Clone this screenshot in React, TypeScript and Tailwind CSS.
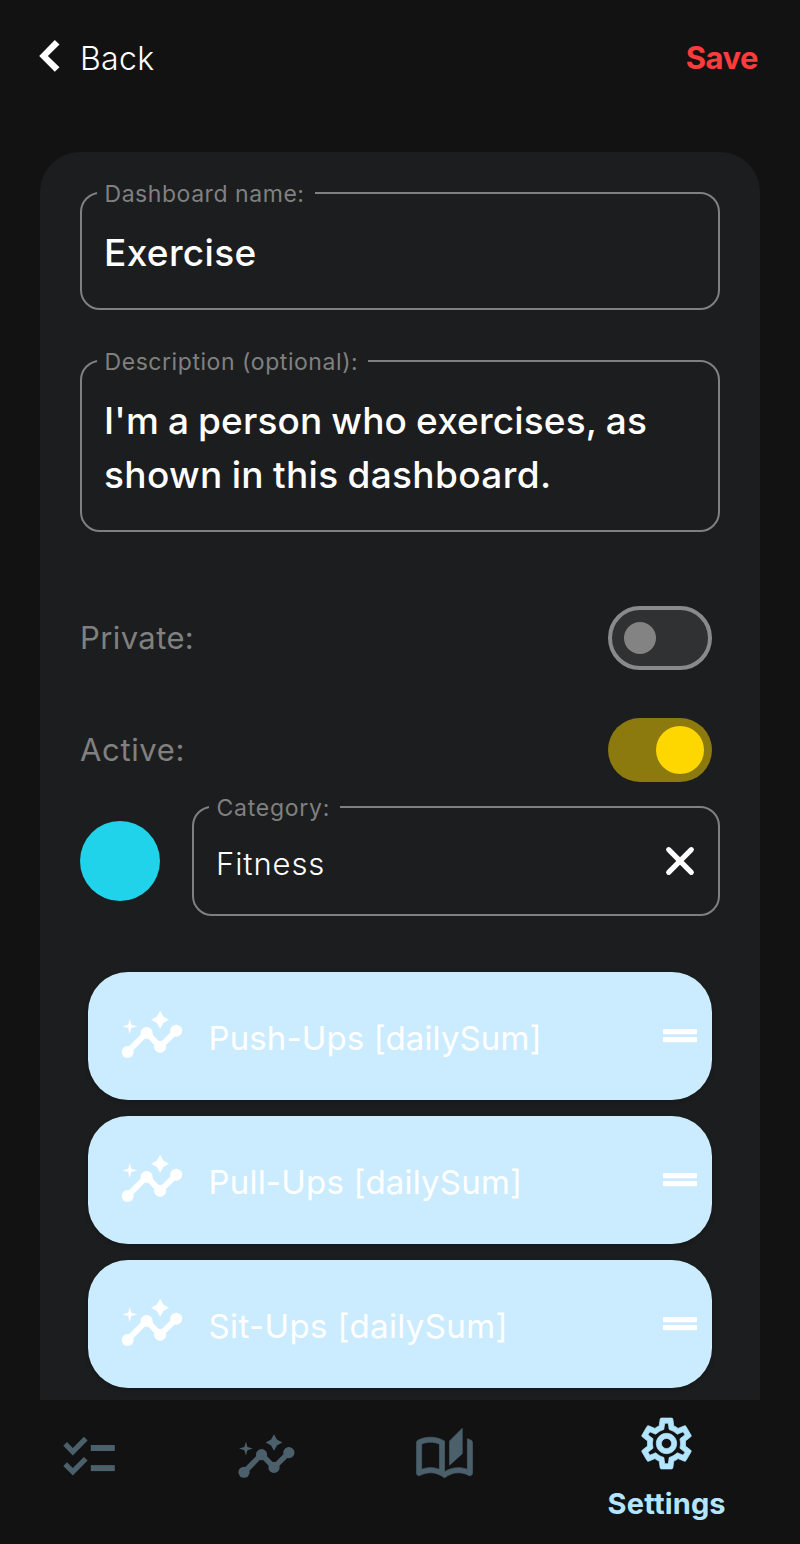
import React from "react";
import { MdOutlineAutoStories, MdOutlineSettings } from "react-icons/md";

function InsightsIcon({ className }: { className: string }) {
  return (
    <svg viewBox="0 0 24 24" className={className} fill="currentColor">
      <path d="M3.15 17.8L10.05 10.8L14.95 15.9L20.8 10.1" fill="none" stroke="currentColor" strokeWidth="2.15" />
      <circle cx="3.15" cy="17.8" r="2.2" />
      <circle cx="10.05" cy="10.9" r="2.2" />
      <circle cx="14.95" cy="15.9" r="2.2" />
      <circle cx="20.8" cy="10.1" r="2.2" />
      <path d="M14.95 2.85L16.1 4.95L18.2 6.1L16.1 7.25L14.95 9.35L13.8 7.25L11.7 6.1L13.8 4.95Z" />
      <path d="M3.9 5.8L4.5 7.9L6.6 8.5L4.5 9.1L3.9 11.2L3.3 9.1L1.2 8.5L3.3 7.9Z" />
    </svg>
  );
}

function ChecklistIcon({ className }: { className: string }) {
  return (
    <svg viewBox="0 0 61 61" className={className} fill="currentColor">
      <path d="M5.3 18.8L9 15.1L14.8 20.9L25.9 9.8L29.6 13.4L14.8 28.5Z" />
      <path d="M5.3 38.9L9 35.2L14.8 41L25.9 29.9L29.6 33.5L14.8 48.6Z" />
      <rect x="32.8" y="18" width="24" height="6" />
      <rect x="32.8" y="38.1" width="24" height="6" />
    </svg>
  );
}

function Field({ label, labelClass, className, children }: { label: string; labelClass: string; className: string; children: React.ReactNode }) {
  return (
    <fieldset className={`rounded-[20px] border-2 border-[#808080] ${className}`}>
      <legend className={`ml-[15px] h-6 pr-[10px] pl-[7.5px] text-[23px] leading-[26px] whitespace-nowrap text-[#808080] ${labelClass}`}>{label}</legend>
      {children}
    </fieldset>
  );
}

function Item({ label, className }: { label: string; className: string }) {
  return (
    <li className="flex h-32 shrink-0 items-center rounded-[40px] bg-[#cbecff] pr-[15px] pl-[31px] text-white shadow-[0_2px_4px_rgba(0,0,0,0.2)]">
      <InsightsIcon className="size-[66px] shrink-0" />
      <span className={`ml-[23.5px] flex-1 pt-[5px] text-[33px] whitespace-nowrap ${className}`}>{label}</span>
      <svg viewBox="0 0 34 14" className="h-[14px] w-[34px] shrink-0" fill="currentColor">
        <rect width="34" height="5.2" rx="0.8" />
        <rect y="8" width="34" height="5.2" rx="0.8" />
      </svg>
    </li>
  );
}

export default function App() {
  return (
    <div className="flex h-[1544px] w-[800px] flex-col overflow-hidden bg-[#121212] font-['Inter','Noto_Sans',sans-serif] text-white">
      <header className="flex h-[152px] shrink-0 items-start justify-between pr-[42px] pl-[39px]">
        <button className="mt-9 flex h-10 items-center">
          <svg viewBox="0 0 21 32" className="h-8 w-[21px]" fill="currentColor">
            <path d="M15.8 0L20.5 4.6L8.9 16L20.5 27.2L15.8 31.8L0.2 16Z" />
          </svg>
          <span className="ml-[20px] pt-[5px] text-[32px] leading-10 font-[350] tracking-[0.3px]">Back</span>
        </button>
        <button className="mt-[38px] text-[31px] leading-10 font-bold tracking-[-0.5px] text-[#ff3b3b]">Save</button>
      </header>

      <main className="mx-10 flex h-[1248px] shrink-0 flex-col overflow-hidden rounded-t-[40px] bg-[#1c1d1e] px-10 pt-[29px]">
        <Field label="Dashboard name:" labelClass="tracking-[0.55px]" className="h-[129px] shrink-0">
          <div className="pt-[21px] pl-[22px] text-[37px] leading-[54px] font-medium tracking-[0.35px]">Exercise</div>
        </Field>
        <Field label="Description (optional):" labelClass="tracking-[0.56px]" className="mt-[39px] h-[183px] shrink-0">
          <div className="pt-[21px] pl-[22px] text-[37px] leading-[54px] font-medium whitespace-nowrap">
            <p className="tracking-[0.16px] [word-spacing:-1.1px]">I'm a person who exercises, as</p>
            <p className="tracking-[0.37px] [word-spacing:-1.3px]">shown in this dashboard.</p>
          </div>
        </Field>

        <div className="mt-[74px] flex h-16 shrink-0 items-center justify-between pr-2">
          <span className="text-[31px] tracking-[0.4px] text-[#808080]">Private:</span>
          <span className="flex h-16 w-[104px] items-center rounded-full border-4 border-[#8a8a8a] bg-[#303132] pl-3">
            <span className="size-8 rounded-full bg-[#838383]" />
          </span>
        </div>
        <div className="mt-12 flex h-16 shrink-0 items-center justify-between pr-2">
          <span className="text-[31px] tracking-[0.65px] text-[#808080]">Active:</span>
          <span className="flex h-16 w-[104px] items-center justify-end rounded-full bg-[#8c7a0f] pr-2">
            <span className="size-12 rounded-full bg-[#ffd700]" />
          </span>
        </div>

        <div className="mt-[13px] flex h-[121px] shrink-0">
          <span className="mt-[26px] size-20 shrink-0 rounded-full bg-[#20d3ea]" />
          <Field label="Category:" labelClass="tracking-[0.75px]" className="ml-8 h-[121px] flex-1">
            <div className="flex h-[84px] items-center justify-between pr-[23px] pl-[22px]">
              <span className="pt-[5px] text-[31px] leading-10 font-[350] tracking-[0.9px]">Fitness</span>
              <svg viewBox="0 0 30 30" className="size-[30px]" stroke="currentColor" strokeWidth="5.2" strokeLinecap="round">
                <path d="M3.7 3.7L26.3 26.3M26.3 3.7L3.7 26.3" />
              </svg>
            </div>
          </Field>
        </div>

        <ul className="mx-2 mt-14 flex flex-col gap-4">
          <Item label="Push-Ups [dailySum]" className="tracking-[0.12px]" />
          <Item label="Pull-Ups [dailySum]" className="tracking-[0.2px]" />
          <Item label="Sit-Ups [dailySum]" className="tracking-[0.37px]" />
        </ul>
      </main>

      <nav className="flex h-36 shrink-0 text-[#4b606b]">
        <a className="flex flex-1 justify-center pt-[27px]"><ChecklistIcon className="size-[61px]" /></a>
        <a className="flex flex-1 justify-center pt-[27px]"><InsightsIcon className="size-[61px]" /></a>
        <a className="flex flex-1 justify-center pt-[27px]"><MdOutlineAutoStories className="size-[61px] [&>path:not([fill=none])]:stroke-current [&>path:not([fill=none])]:[stroke-width:0.25]" /></a>
        <a className="flex flex-[1.5] flex-col items-center pt-[13px] text-[#b3e5ff]">
          <MdOutlineSettings className="size-[61px] [&>path:not([fill=none])]:stroke-current [&>path:not([fill=none])]:[stroke-width:0.3]" />
          <span className="mt-[10px] text-[29px] leading-10 font-bold tracking-[0.15px]">Settings</span>
        </a>
      </nav>
    </div>
  );
}
